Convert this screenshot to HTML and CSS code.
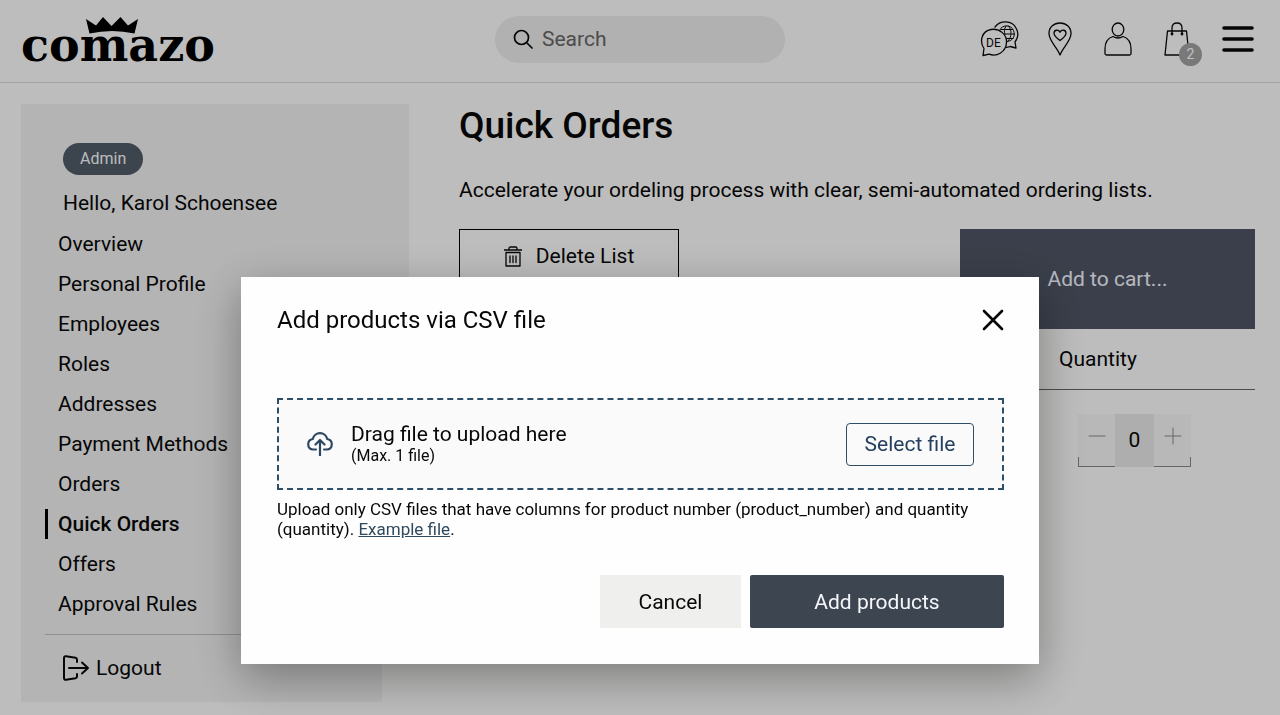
FILE: index.html
```html
<!DOCTYPE html>
<html lang="en">
<head>
    <meta charset="UTF-8">
    <meta name="viewport" content="width=device-width, initial-scale=1.0">
    <title>Quick Orders - comazo</title>
    <link rel="stylesheet" href="styles.css">
</head>
<body>

    <!-- Header -->
    <header class="header">
        <a class="logo" href="#">
            <svg class="crown" width="54" height="18" viewBox="0 0 54 18" aria-hidden="true">
                <path d="M1 2L11 8.500L18 0L26.500 9L35.500 0L43 8.500L53 2L49.500 16.500Q27 11.500 4.500 16.500Z"/>
            </svg>
            <span class="logo-text">comazo</span>
        </a>

        <form class="search">
            <svg width="20" height="20" viewBox="0 0 20 20" aria-hidden="true">
                <circle cx="8.500" cy="8.500" r="7"/>
                <path d="M13.500 13.500L19 19"/>
            </svg>
            <input type="text" id="search" placeholder="Search" aria-label="Search">
        </form>

        <nav class="header-icons">
            <button type="button" aria-label="Language">
                <svg class="lang" width="40" height="36" viewBox="0 0 40 36">
                    <path d="M15 6C20-1 32-1 36 7C39 12 38 17 35 21L36 27L30 25.500Q28 26.300 26 26.300"/>
                    <path d="M3 34.500L4 27.500C-1 20 2 10 11 8.500C20 7 27 14 26.500 21.500C26 31 17 36 9 33.200Z"/>
                    <path class="globe" d="M20 8.500C22 4 31 3 33.500 9.500C36 15.500 32 20.500 27 20.500M21 8.500H32.500M24 13H34.500M26.500 17.500H33M26 5C24 8 24 11 25 13M28.500 5C32 9 32 16 28 20"/>
                    <text x="6" y="26">DE</text>
                </svg>
            </button>
            <button type="button" aria-label="Wishlist">
                <svg width="24" height="34" viewBox="0 0 24 34">
                    <path d="M12 33C9 25 1 19 1 11.500C1 5 6 1 12 1S23 5 23 11.500C23 19 15 25 12 33Z"/>
                    <path d="M12 18.500C8 15.500 6 13.500 6 11.200C6 7.600 10.500 7.200 12 10.300C13.500 7.200 18 7.600 18 11.200C18 13.500 16 15.500 12 18.500Z"/>
                </svg>
            </button>
            <button type="button" aria-label="Account">
                <svg width="28" height="34" viewBox="0 0 28 34">
                    <ellipse cx="14" cy="7.500" rx="5.800" ry="6.500"/>
                    <path d="M9 14.500C4 16 1 20.500 1 27V31.500Q1 33 2.500 33H25.500Q27 33 27 31.500V27C27 20.500 24 16 19 14.500Q14 17.500 9 14.500Z"/>
                </svg>
            </button>
            <button type="button" class="cart" aria-label="Cart">
                <svg width="26" height="34" viewBox="0 0 26 34">
                    <path d="M3.500 9H22.500L25 33H1Z"/>
                    <path d="M8 12.500V6Q8 1 13 1T18 6V12.500"/>
                    <circle cx="8" cy="12" r=".8"/>
                    <circle cx="18" cy="12" r=".8"/>
                </svg>
                <span class="cart-count">2</span>
            </button>
            <button type="button" aria-label="Menu">
                <svg class="burger" width="32" height="28" viewBox="0 0 32 28">
                    <path d="M2 3H30M2 14H30M2 25H30"/>
                </svg>
            </button>
        </nav>
    </header>

    <div class="page">
        <!-- Account menu -->
        <aside class="sidebar">
            <div class="sidebar-main">
                <span class="role">Admin</span>
                <p class="hello">Hello, Karol Schoensee</p>
                <ul class="menu">
                    <li><a href="#">Overview</a></li>
                    <li><a href="#">Personal Profile</a></li>
                    <li><a href="#">Employees</a></li>
                    <li><a href="#">Roles</a></li>
                    <li><a href="#">Addresses</a></li>
                    <li><a href="#">Payment Methods</a></li>
                    <li><a href="#">Orders</a></li>
                    <li><a href="#" class="active">Quick Orders</a></li>
                    <li><a href="#">Offers</a></li>
                </ul>
            </div>
            <div class="sidebar-bottom">
                <ul class="menu">
                    <li><a href="#">Approval Rules</a></li>
                </ul>
                <a href="#" class="logout">
                    <svg width="28" height="26" viewBox="0 0 28 26" aria-hidden="true">
                        <path d="M15 7V4.500Q15 3.200 13.500 2.800L4 1.200Q2 1 2 3V23Q2 25 4 24.800L13.500 23.200Q15 22.800 15 21.500V19M7 13H26M20 7.500L26 13L20 18.500"/>
                    </svg>
                    Logout
                </a>
            </div>
        </aside>

        <!-- Order list -->
        <main class="content">
            <h1>Quick Orders</h1>
            <p class="intro">Accelerate your ordeling process with clear, semi-automated ordering lists.</p>
            <div class="actions">
                <button type="button" class="delete-list">
                    <svg width="18" height="21" viewBox="0 0 18 21" aria-hidden="true">
                        <path d="M0 4H18M5 4V2.500Q5 1 6.500 1H11.500Q13 1 13 2.500V4M2 6.500H16V20H2ZM6 10V16.500M9 10V16.500M12 10V16.500"/>
                    </svg>
                    Delete List
                </button>
                <button type="button" class="add-cart">Add to cart...</button>
            </div>
            <table class="list">
                <thead>
                    <tr>
                        <td></td>
                        <th scope="col">Quantity</th>
                    </tr>
                </thead>
                <tbody>
                    <tr>
                        <td></td>
                        <td>
                            <div class="stepper">
                                <button type="button" class="minus" aria-label="Decrease">
                                    <svg width="18" height="18" viewBox="0 0 18 18"><path d="M1 9H17"/></svg>
                                </button>
                                <input type="text" value="0" aria-label="Quantity">
                                <button type="button" class="plus" aria-label="Increase">
                                    <svg width="18" height="18" viewBox="0 0 18 18"><path d="M1 9H17M9 1V17"/></svg>
                                </button>
                            </div>
                        </td>
                    </tr>
                </tbody>
            </table>
        </main>
    </div>

    <!-- CSV upload popup -->
    <div class="overlay">
        <div class="modal" role="dialog" aria-modal="true" aria-labelledby="modalTitle">
            <div class="modal-head">
                <h2 id="modalTitle">Add products via CSV file</h2>
                <button type="button" class="close" aria-label="Close">
                    <svg width="22" height="22" viewBox="0 0 22 22"><path d="M2 2L20 20M20 2L2 20"/></svg>
                </button>
            </div>

            <div class="dropzone">
                <svg width="26" height="24" viewBox="0 0 26 24" aria-hidden="true">
                    <path d="M9 17.500H6C3 17.500 1.200 15 1.200 12.300C1.200 9.500 3 7.500 5.800 7C6.500 3.500 9.500 1.200 13 1.200S19.500 3.500 20.200 7C23 7.500 24.800 9.500 24.800 12.300C24.800 15 23 17.500 20 17.500H17M13 23.500V8.500M8.500 12.500L13 8L17.500 12.500"/>
                </svg>
                <div class="drop-text">
                    <p>Drag file to upload here</p>
                    <small>(Max. 1 file)</small>
                </div>
                <button type="button" class="select-file">Select file</button>
            </div>

            <p class="hint">Upload only CSV files that have columns for product number (product_number) and quantity (quantity). <a href="#">Example file</a>.</p>

            <div class="modal-actions">
                <button type="button" class="cancel">Cancel</button>
                <button type="button" class="add-products">Add products</button>
            </div>
        </div>
    </div>

</body>
</html>
```
FILE: styles.css
```css
* {
    box-sizing: border-box;
}

body {
    margin: 0;
    min-height: 100vh;
    overflow: hidden;
    background-color: #fdfdfc;
    color: #080808;
    font-family: Roboto, "Liberation Sans", sans-serif;
    font-size: 21px;
}

h1, h2, p, ul {
    margin: 0;
    padding: 0;
}

a {
    color: inherit;
    text-decoration: none;
}

button,
input {
    font: inherit;
    color: inherit;
    border: none;
    border-radius: 0;
    background: none;
    padding: 0;
    margin: 0;
}

button {
    cursor: pointer;
}

svg {
    display: block;
    flex: none;
    fill: none;
    stroke: currentColor;
    stroke-linecap: round;
    stroke-linejoin: round;
}

/* Header */
.header {
    display: grid;
    grid-template-columns: 1fr 290px 1fr;
    align-items: center;
    height: 83px;
    padding: 0 21px 4px;
    border-bottom: 1px solid #d8d8d8;
}

.logo {
    display: flex;
    flex-direction: column;
    justify-self: start;
    align-items: center;
    height: 45px;
    color: #000;
}

.crown {
    fill: #000;
    stroke: none;
    margin-right: 12px;
}

.logo-text {
    font-family: "DejaVu Serif", serif;
    font-size: 46px;
    font-weight: bold;
    line-height: 20px;
}

.search {
    display: flex;
    align-items: center;
    gap: 9px;
    height: 47px;
    padding: 0 18px;
    border-radius: 24px;
    background-color: #ececec;
}

.search svg {
    stroke-width: 1.7;
}

.search input {
    flex: 1;
    min-width: 0;
    outline: none;
}

.search input::placeholder {
    color: #666;
    opacity: 1;
}

.header-icons {
    display: flex;
    justify-content: flex-end;
    align-items: center;
    gap: 32px;
    padding-right: 5px;
}

.header-icons svg {
    stroke-width: 1.3;
}

.header-icons .lang {
    margin-right: -4px;
}

.lang .globe {
    stroke-width: 1;
}

.lang text {
    fill: currentColor;
    stroke: none;
    font-size: 12px;
}

.header-icons .burger {
    stroke-width: 3.6;
}

.cart {
    position: relative;
}

.cart-count {
    position: absolute;
    right: -12px;
    bottom: -10px;
    width: 23px;
    height: 23px;
    border-radius: 50%;
    background-color: #a2a2a2;
    color: #fff;
    font-size: 14px;
    line-height: 23px;
}

/* Page */
.page {
    display: flex;
    align-items: flex-start;
    gap: 50px;
    padding: 21px 25px 0 21px;
}

.sidebar {
    width: 388px;
    flex: none;
}

.sidebar-main {
    padding: 39px 24px 0;
    background-color: #f1f1f1;
}

.role {
    display: inline-block;
    margin-left: 18px;
    padding: 0 17px;
    border-radius: 16px;
    background-color: #505b69;
    color: #fafafa;
    font-size: 16px;
    line-height: 32px;
}

.hello {
    margin: 10px 0 3px 18px;
    line-height: 36px;
}

.menu {
    list-style: none;
}

.menu li {
    display: flex;
    align-items: center;
    height: 40px;
}

.menu a {
    padding-left: 10px;
    border-left: 3px solid transparent;
    line-height: 30px;
}

.menu .active {
    border-left-color: #000;
    font-weight: 500;
}

.sidebar-bottom {
    width: 361px;
    padding: 0 24px 2px;
    background-color: #f1f1f1;
}

.logout {
    display: flex;
    align-items: center;
    gap: 6px;
    height: 66px;
    margin-top: 10px;
    padding-left: 17px;
    border-top: 1px solid #c0c0c0;
}

.logout svg {
    stroke-width: 2;
}

.content {
    flex: 1;
    min-width: 0;
}

h1 {
    font-size: 37px;
    font-weight: 500;
    line-height: 44px;
}

.intro {
    margin: 26px 0 23px;
    line-height: 32px;
}

.actions {
    display: flex;
    justify-content: space-between;
    align-items: flex-start;
}

.delete-list {
    display: flex;
    justify-content: center;
    align-items: center;
    gap: 14px;
    width: 220px;
    height: 54px;
    border: 1px solid #000;
}

.delete-list svg {
    stroke-width: 1.3;
}

.add-cart {
    width: 295px;
    height: 100px;
    background-color: #4e5564;
    color: #f4f4ff;
}

/* Product list */
.list {
    width: 100%;
    border-collapse: collapse;
}

.list th {
    width: 196px;
    font-weight: 400;
    text-align: left;
}

.list thead tr {
    height: 60px;
    border-bottom: 1px solid #666;
}

.list th,
.list td {
    padding: 0;
}

.stepper {
    display: flex;
    width: 113px;
    margin: 24px 0 0 19px;
    background-color: #f6f6f6;
}

.stepper button {
    position: relative;
    width: 37px;
    height: 53px;
    padding: 0 0 8px 10px;
    color: #888;
}

.stepper input {
    width: 39px;
    background-color: #e9e9e9;
    text-align: center;
}

/* corner lines below the buttons */
.stepper button::after {
    content: "";
    position: absolute;
    left: 0;
    right: 0;
    bottom: 0;
    height: 9px;
    border-bottom: 1px solid #888;
}

.stepper .minus::after {
    border-left: 1px solid #888;
}

.stepper .plus::after {
    border-right: 1px solid #888;
}

/* Popup */
.overlay {
    position: fixed;
    top: 0;
    bottom: 0;
    left: 0;
    right: 0;
    display: flex;
    justify-content: center;
    align-items: flex-end;
    padding-bottom: 51px;
    background-color: rgba(0, 0, 0, 0.25);
}

.modal {
    width: 798px;
    max-width: 100%;
    padding: 25px 35px 36px 36px;
    background-color: #fefefe;
    box-shadow: 0 14px 44px rgba(0, 0, 0, 0.35);
}

.modal-head {
    display: flex;
    justify-content: space-between;
    align-items: center;
    height: 36px;
}

.modal-head h2 {
    font-size: 24px;
    font-weight: 400;
}

.close svg {
    stroke-width: 2.6;
}

.dropzone {
    display: flex;
    align-items: center;
    gap: 18px;
    height: 92px;
    margin-top: 60px;
    padding: 0 28px;
    border: 2px dashed #2f4f68;
    background-color: #fafafa;
}

.dropzone svg {
    color: #2c4763;
    stroke-width: 2.2;
}

.drop-text {
    flex: 1;
}

.drop-text p {
    line-height: 24px;
}

.drop-text small {
    display: block;
    font-size: 16px;
    line-height: 20px;
}

.select-file {
    width: 128px;
    height: 43px;
    border: 1px solid #2f4f68;
    border-radius: 4px;
    color: #25405f;
}

.hint {
    margin-top: 9px;
    font-size: 17px;
    line-height: 20px;
}

.hint a {
    color: #2f4a5f;
    text-decoration: underline;
}

.modal-actions {
    display: flex;
    justify-content: flex-end;
    gap: 9px;
    margin-top: 36px;
}

.modal-actions button {
    height: 53px;
}

.cancel {
    width: 141px;
    background-color: #efefee;
}

.modal-actions .add-products {
    width: 254px;
    border-radius: 2px;
    background-color: #3c4550;
    color: #f4f6fa;
}
```
